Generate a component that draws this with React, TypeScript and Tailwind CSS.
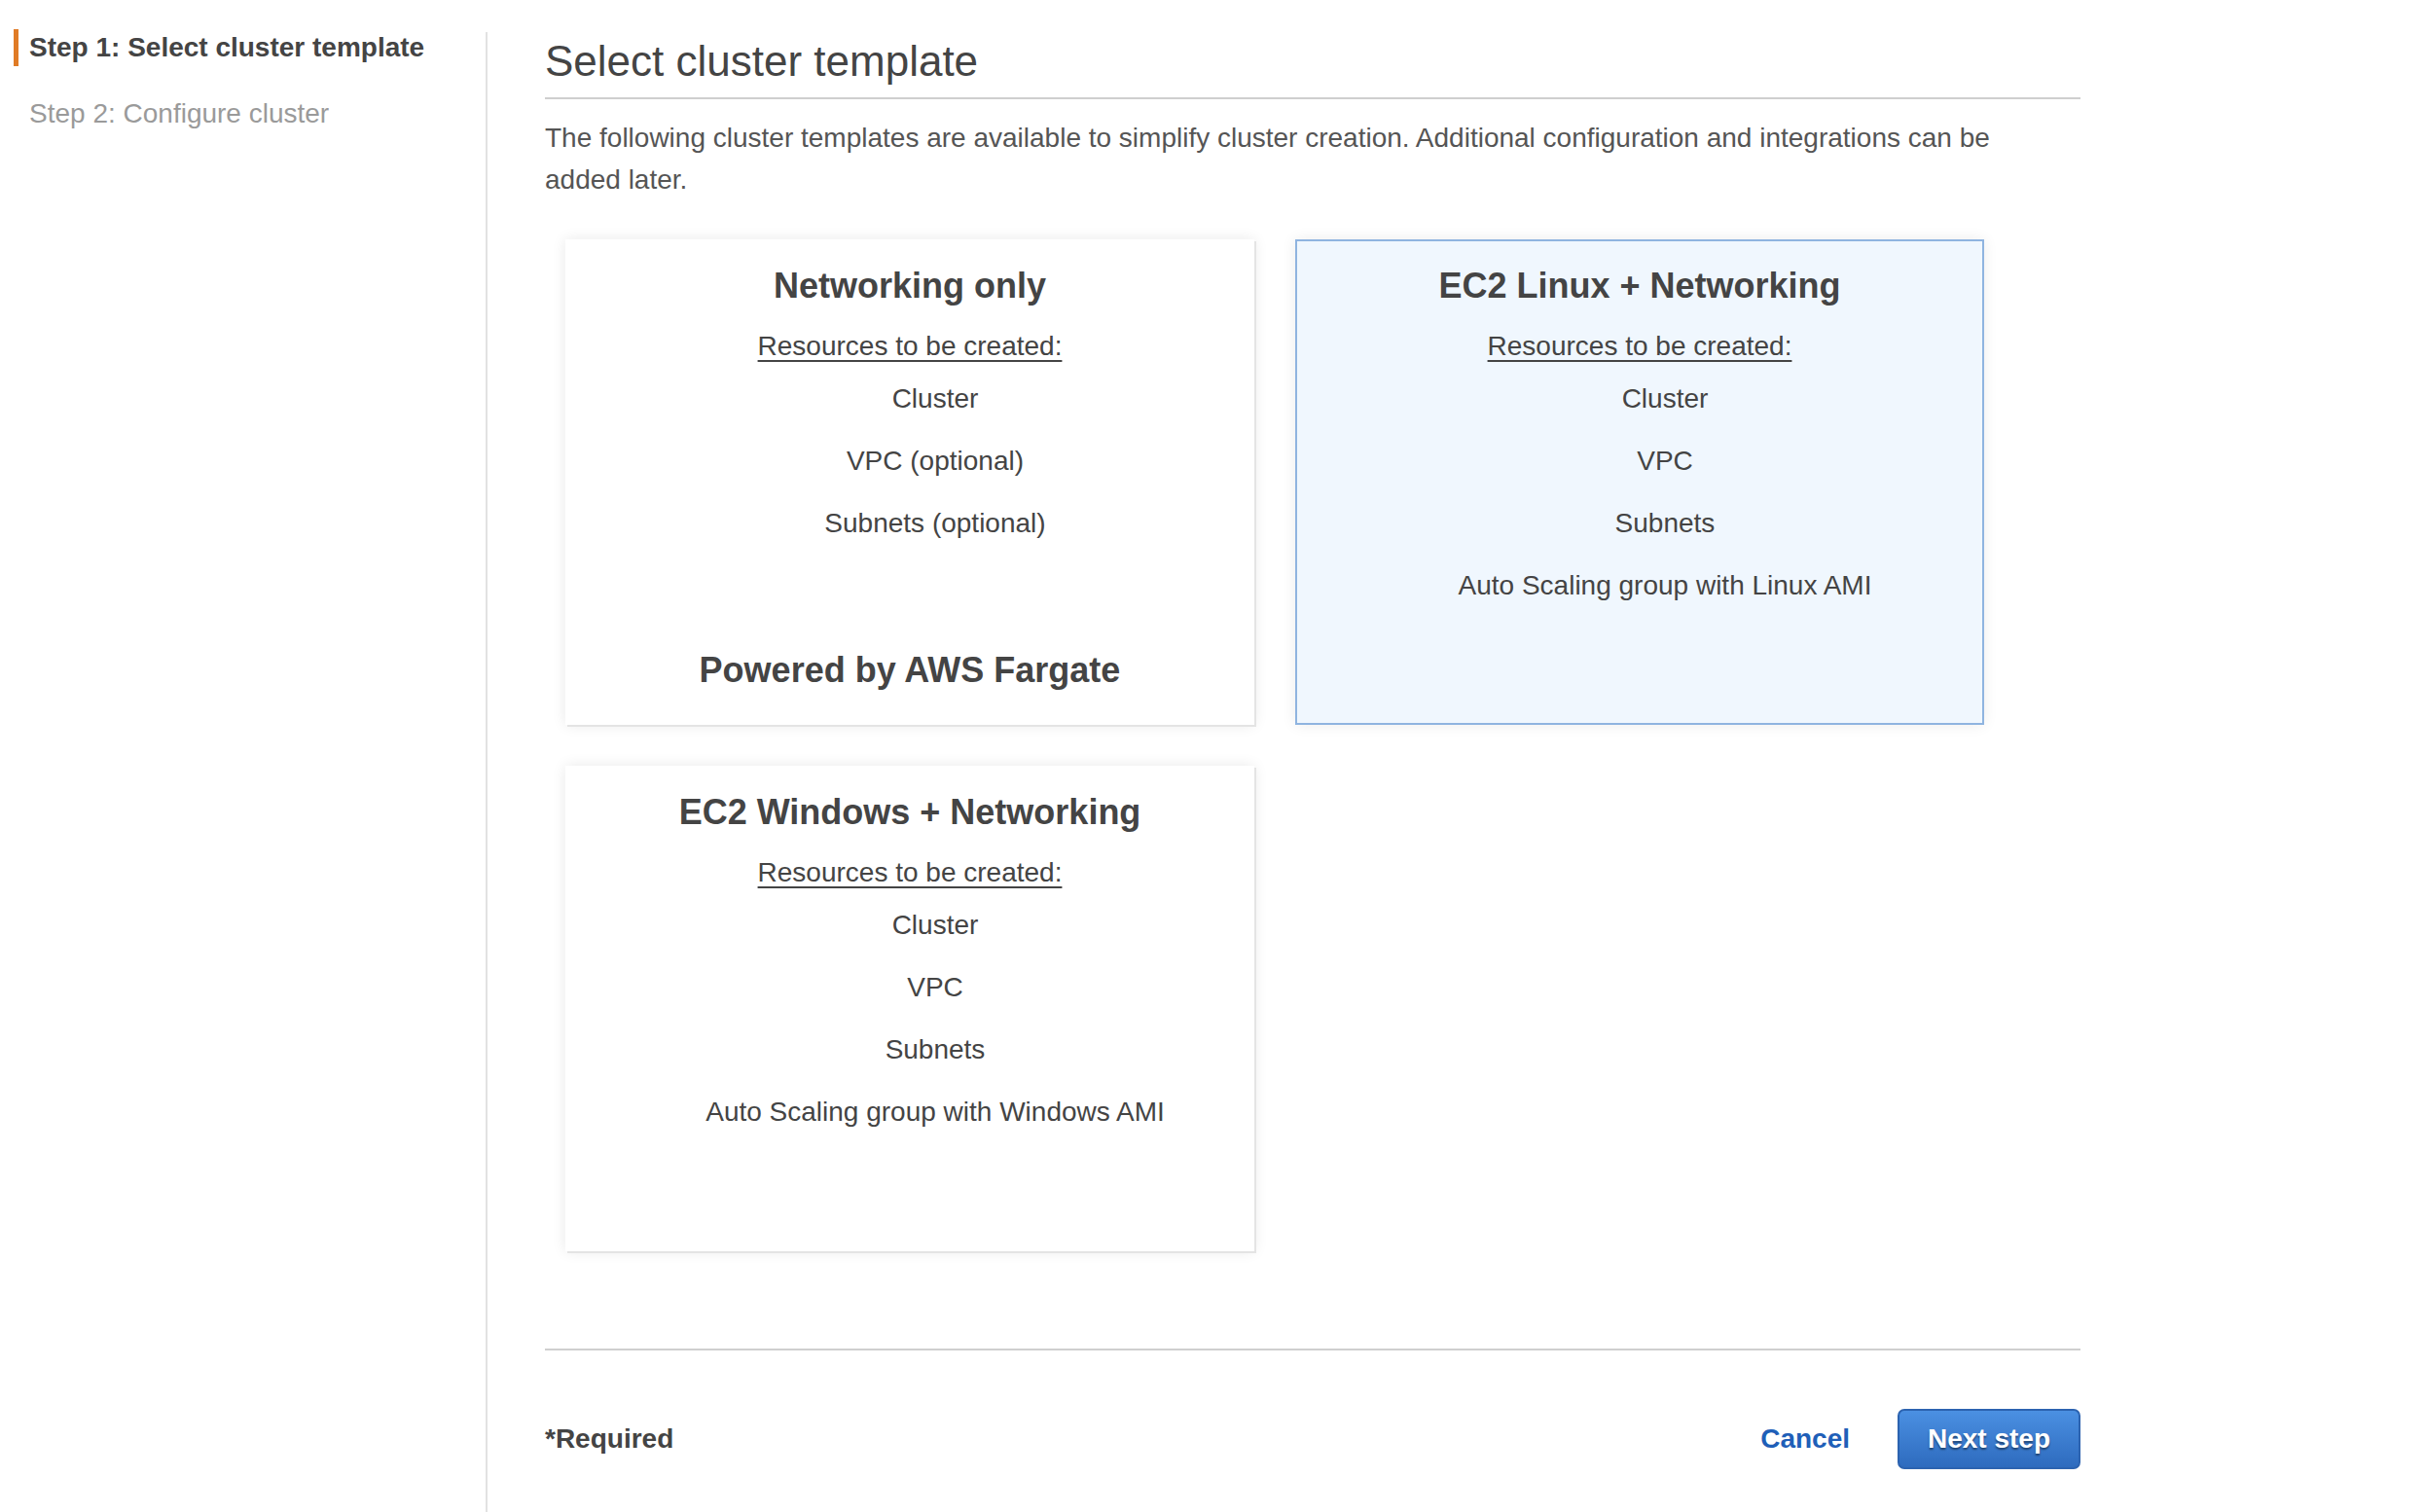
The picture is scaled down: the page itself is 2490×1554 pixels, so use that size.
import React from "react";

type Template = {
  title: string;
  items: string[];
  footer?: string;
  selected?: boolean;
};

const templates: Template[] = [
  {
    title: "Networking only",
    items: ["Cluster", "VPC (optional)", "Subnets (optional)"],
    footer: "Powered by AWS Fargate",
  },
  {
    title: "EC2 Linux + Networking",
    items: ["Cluster", "VPC", "Subnets", "Auto Scaling group with Linux AMI"],
    selected: true,
  },
  {
    title: "EC2 Windows + Networking",
    items: ["Cluster", "VPC", "Subnets", "Auto Scaling group with Windows AMI"],
  },
];

function TemplateCard({ t }: { t: Template }) {
  return (
    <div
      className={`flex h-[499px] flex-col items-center ${
        t.selected
          ? "border-2 border-[#8fb4e0] bg-[#f0f7fe] pt-[24px] shadow-[0_0_14px_rgba(0,0,0,0.08)]"
          : "bg-white pt-[26px] shadow-[2px_2px_0_#e4e4e4,0_0_14px_rgba(0,0,0,0.09)]"
      }`}
    >
      <h2 className="text-[36px] font-bold leading-[44px] text-[#444]">{t.title}</h2>
      <div className="mt-[18px] text-[28px] leading-[44px] text-[#444] underline decoration-2 underline-offset-[5px]">
        Resources to be created:
      </div>
      <ul className="pl-[52px] text-center">
        {t.items.map((item) => (
          <li key={item} className="py-[10px] text-[28px] leading-[44px] text-[#444]">
            {item}
          </li>
        ))}
      </ul>
      {t.footer && (
        <div className="mt-auto pb-[34px] text-[36px] font-bold leading-[44px] text-[#444]">
          {t.footer}
        </div>
      )}
    </div>
  );
}

export default function App() {
  return (
    <div className="flex min-h-screen bg-white font-['Liberation_Sans',Arial,sans-serif] text-[#444]">
      {/* Wizard steps */}
      <aside className="w-[499px] shrink-0 pt-[30px]">
        <div className="ml-[14px] border-l-[5px] border-[#e07b26] pl-[11px] text-[28px] font-bold leading-[38px] text-[#444]">
          Step 1: Select cluster template
        </div>
        <div className="mt-[30px] pl-[30px] text-[28px] leading-[38px] text-[#9a9a9a]">
          Step 2: Configure cluster
        </div>
      </aside>
      <div className="mt-[33px] w-[2px] shrink-0 bg-[#e2e2e2]" />

      {/* Main */}
      <main className="w-[1637px] shrink-0 pl-[59px]">
        <h1 className="pt-[37px] pb-[11px] text-[44px] font-normal leading-[52px] text-[#444]">
          Select cluster template
        </h1>
        <hr className="border-0 border-t-2 border-[#cfcfcf]" />
        <p className="mt-[18px] max-w-[1560px] text-[28px] leading-[43px] text-[#555]">
          The following cluster templates are available to simplify cluster creation. Additional
          configuration and integrations can be added later.
        </p>

        <div className="mt-[40px] grid grid-cols-[708px_708px] gap-x-[42px] gap-y-[42px] pl-[21px]">
          {templates.map((t) => (
            <TemplateCard key={t.title} t={t} />
          ))}
        </div>

        <hr className="mt-[100px] border-0 border-t-2 border-[#cfcfcf]" />
        <div className="mt-[60px] flex h-[62px] items-center justify-between">
          <span className="text-[28px] font-bold text-[#444]">*Required</span>
          <div className="flex items-center gap-[49px]">
            <button className="text-[28px] font-bold text-[#1f5fb8]">Cancel</button>
            <button className="h-[62px] w-[188px] rounded-[7px] border-2 border-[#2c63b0] bg-gradient-to-b from-[#4b90e2] to-[#2e6bbe] text-[28px] font-bold text-white [text-shadow:0_2px_2px_rgba(0,0,0,0.45)]">
              Next step
            </button>
          </div>
        </div>
      </main>
    </div>
  );
}
